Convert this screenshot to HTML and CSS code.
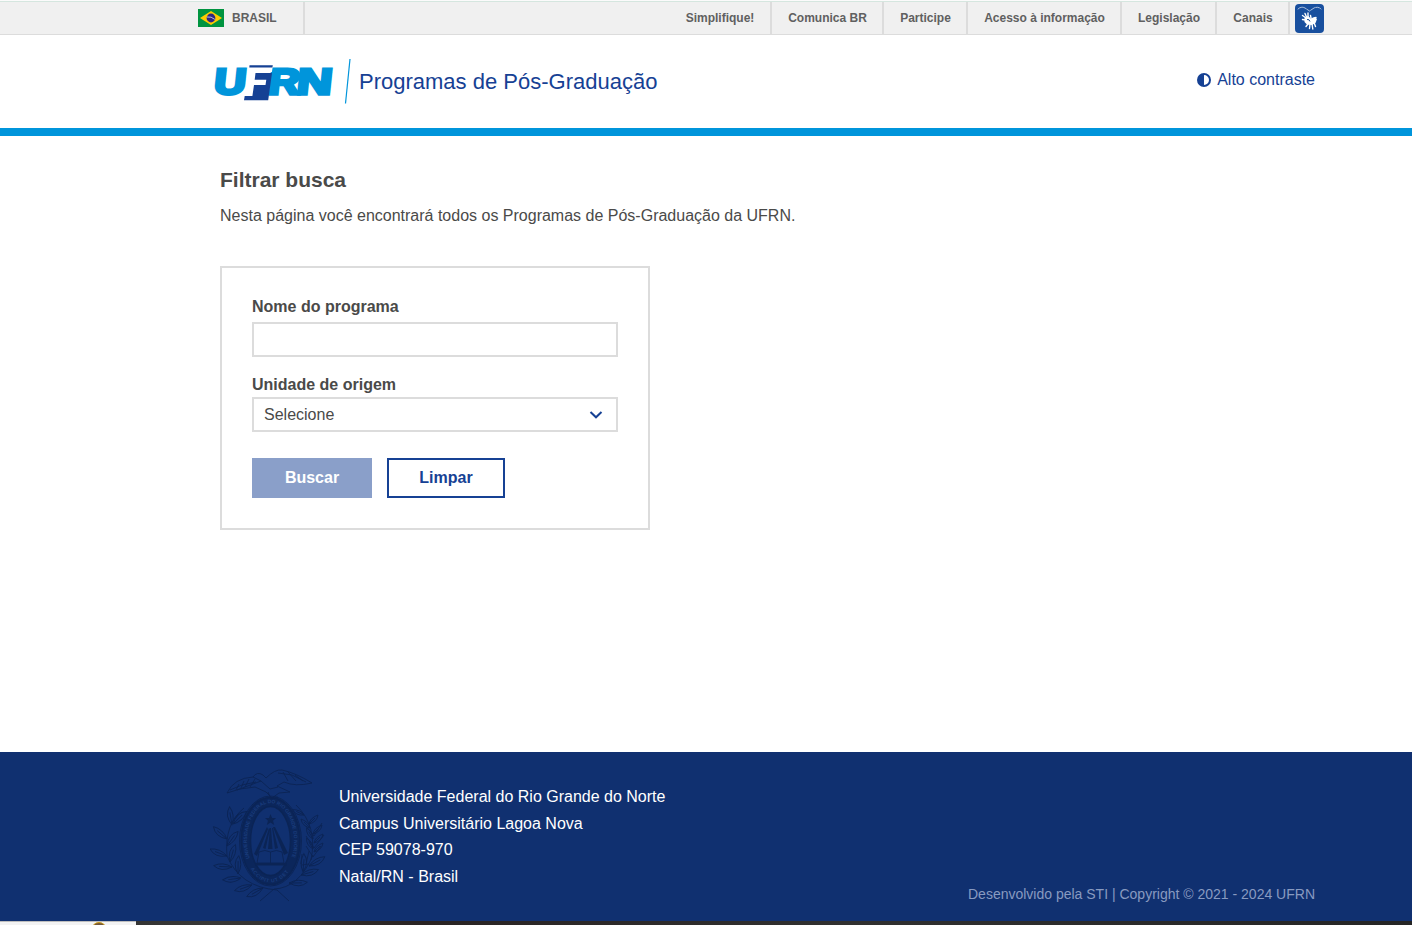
FILE: index.html
```
<!DOCTYPE html>
<html lang="pt-BR">
<head>
<meta charset="utf-8">
<title>Programas de Pós-Graduação - UFRN</title>
<link rel="stylesheet" href="styles.css">
</head>
<body>
<div class="page">
  <nav class="govbar">
    <a class="brasil">
      <svg class="flag" viewBox="0 0 26 18"><path fill="#009440" d="M0 0h26v18H0z"/><path fill="#ffcb00" d="M13 2l11 7-11 7L2 9z"/><circle cx="13" cy="9" r="4.400" fill="#302681"/><path d="M8.800 8q4.500-.8 8 2.400" fill="none" stroke="#dfe3ef" stroke-width=".8"/></svg>
      <span>BRASIL</span>
    </a>
    <ul class="links">
      <li class="w-simp">Simplifique!</li><li class="w-com">Comunica BR</li><li class="w-part">Participe</li><li class="w-acesso">Acesso à informação</li><li class="w-leg">Legislação</li><li class="w-canais">Canais</li>
    </ul>
    <svg class="vlibras" viewBox="0 0 29 29"><rect width="29" height="29" rx="4" fill="#184f9e"/><g fill="none" stroke="#fff" stroke-linecap="round"><path d="M3 5q3-3 7-1l4.500 3L19 4q4-2 7 1" stroke-width=".8" stroke-dasharray="4 1" opacity=".8"/><path d="M11 14L7.500 11.500M11.500 13L10 9.500M13 13V9M10.500 16L7.500 15.500M16 14l-.5-2.500M13 20l-2 2.500M15 20l-.5 4.500M17 20l.8 5M19 18.500l1.500 4M18 15l3-1.500" stroke-width="1.400"/></g><path fill="#fff" d="M9.500 13.500l4-1.500 2 2.500 4-1.500 2.500 2-1.500 4-3.500 2-5-.5-2.500-2.500z"/><path d="M12 15.500q2.500-.5 3 2" fill="none" stroke="#184f9e"/></svg>
  </nav>

  <header class="header">
    <div class="brand">
      <svg class="logo" viewBox="0 0 140 50" role="img" aria-label="UFRN">
        <g class="logo-letters">
          <text transform="translate(.3 38.800) skewX(-6)" textLength="31.500" lengthAdjust="spacingAndGlyphs">U</text>
          <text transform="translate(54.500 38.600) skewX(-6)" textLength="31" lengthAdjust="spacingAndGlyphs">R</text>
          <text transform="translate(83 38.600) skewX(-6)" textLength="35" lengthAdjust="spacingAndGlyphs">N</text>
        </g>
        <path fill="#fff" d="M35.500 12h24.200l-.8 5H42.600l-1 5.700H56l-.6 4.100H40.800l-2 12.700H32.500z"/>
        <path fill="#164194" d="M36.500 10.300h23.300l-.4 2.200H36.300zM42.500 18H59l-3.800 27.300H31l.7-4.300h7.700l1.600-11h11.500l.8-5.300H41.700z"/>
        <path d="M137 4l-4.500 44.500" stroke="#0095db" stroke-width="1.200"/>
      </svg>
      <span class="brand-title">Programas de Pós-Graduação</span>
    </div>
    <a class="contrast"><svg viewBox="0 0 14 14"><circle cx="7" cy="7" r="6" fill="none" stroke="#164194" stroke-width="2"/><path d="M7 1a6 6 0 0 0 0 12z" fill="#164194"/></svg><span>Alto contraste</span></a>
  </header>

  <main class="main">
    <h1>Filtrar busca</h1>
    <p class="intro">Nesta página você encontrará todos os Programas de Pós-Graduação da UFRN.</p>
    <form class="filter">
      <label for="nome">Nome do programa</label>
      <input class="field" id="nome" type="text">
      <label class="second">Unidade de origem</label>
      <div class="field select"><span>Selecione</span><svg viewBox="0 0 14 10"><path d="M1.500 2L7 7.300 12.500 2" fill="none" stroke="#164194" stroke-width="2"/></svg></div>
      <div class="actions"><button type="button" class="btn primary">Buscar</button><button type="button" class="btn outline">Limpar</button></div>
    </form>
  </main>

  <footer class="footer">
    <svg class="seal" viewBox="0 0 120 140">
      <defs>
        <path id="ring-top" d="M40 95A23.500 37.500 0 1 1 81 95"/>
        <path id="ring-bottom" d="M39.500 103A27 41.500 0 0 0 81.500 103"/>
        <path id="leaf" d="M0 0Q-7-8-17-7Q-12 2 0 0M0 0L-12-4.500"/>
        <path id="sprig" d="M0 0Q-1-6-9-9Q-8-2 0 0M0 0L-6-6"/>
      </defs>
      <g fill="none" stroke="#0b2455" stroke-width=".9">
        <ellipse cx="60.500" cy="77" rx="31" ry="45"/>
        <ellipse cx="60.500" cy="77" rx="25" ry="39" stroke-width="9" stroke="#0b265b"/>
        <ellipse cx="60.500" cy="77" rx="29.500" ry="43.500" stroke-width="1.500"/>
        <ellipse cx="60.500" cy="77" rx="20" ry="34.500" stroke-width="1.500"/>
        <path d="M17 29Q24 14 43 13Q47 7 53 11L56 14Q65 5 72 6Q86 9 102 19Q85 23 74 18L67 22 80 28 69 29 62 34 56 28 45 23Q29 24 17 29zM43 13l8 4-24 9M51 17l9 8 8-2M29 20l-3 6m8-9l-3 7m8-9l-4 8m10-8l-5 8M20 26l12-5 14-3M68 9l14 2 14 7M73 8l5 9m0-9l8 9m-1-6l8 6M58 28l3 7 7-2"/>
        <path d="M17 92Q14 60 34 44M101 96Q108 62 86 41M17 92Q30 123 67 126L79 137M103 91Q89 124 64 125L50 137" />
        <g>
          <use href="#leaf" transform="translate(17 92)"/>
          <use href="#leaf" transform="translate(17 75) rotate(20)"/>
          <use href="#leaf" transform="translate(22 61) rotate(60)"/>
          <use href="#leaf" transform="translate(17 82) rotate(105)"/>
          <use href="#leaf" transform="translate(23 60) rotate(115)"/>
          <use href="#leaf" transform="translate(22 103) rotate(-18)"/>
          <use href="#leaf" transform="translate(20 98) rotate(85)"/>
          <use href="#leaf" transform="translate(31 114) rotate(-28)"/>
          <use href="#leaf" transform="translate(28 110) rotate(70)"/>
          <use href="#leaf" transform="translate(42 121) rotate(-40)"/>
          <use href="#leaf" transform="translate(53 124) rotate(-50)"/>
          <use href="#sprig" transform="translate(104 88) scale(-1 1)"/>
          <use href="#sprig" transform="translate(104 79) scale(-1 1)"/>
          <use href="#sprig" transform="translate(103 70) scale(-1 1)"/>
          <use href="#sprig" transform="translate(99 60) scale(-1 1)"/>
          <use href="#sprig" transform="translate(103 85) rotate(15)"/>
          <use href="#sprig" transform="translate(103 75) rotate(15)"/>
          <use href="#sprig" transform="translate(100 64)"/>
          <use href="#sprig" transform="translate(94 51) rotate(-20)"/>
          <use href="#leaf" transform="translate(99 102) scale(-1 1) rotate(8)"/>
          <use href="#leaf" transform="translate(91 111) scale(-1 1) rotate(-5)"/>
          <use href="#leaf" transform="translate(79 119) scale(-1 1) rotate(-20)"/>
          <use href="#leaf" transform="translate(93 108) scale(-1 1) rotate(65)"/>
          <path d="M96 62l8 10 8-13M96 72l8 12 10-13M96 82l7 11 8-11M91 100l1-10m4 10l3-13m-7 14l7-1"/>
        </g>
        <path d="M49 88q6-3 11.500 0 6-3 11.500 0l2 11H47zM60.500 88v11" fill="#103070"/>
      </g>
      <g fill="#0b2455">
        <path d="M60.500 50l1.600 4h4l-3.100 2.700 1.200 4.300-3.700-2.500-3.700 2.500 1.200-4.300L55 54h4z"/>
        <path d="M57 63L44 90l3 2 11-27zM59 64l-6 20 2.500 1L60 65zM60 64l-2 21h4.500l-1.500-21zM62 64l3 21 3-1-5-20zM63 63l11 28 4-2-13-26zM46 99h30l1 2.500H45z"/>
      </g>
      <g class="seal-text"><text><textPath href="#ring-top" startOffset="1" textLength="131" lengthAdjust="spacingAndGlyphs">UNIVERSIDADE FEDERAL DO RIO GRANDE DO NORTE</textPath></text><text><textPath href="#ring-bottom" startOffset="2" textLength="47">ACCIPIT UT DET</textPath></text></g>
    </svg>
    <address>Universidade Federal do Rio Grande do Norte<br>Campus Universitário Lagoa Nova<br>CEP 59078-970<br>Natal/RN - Brasil</address>
    <p class="copyright">Desenvolvido pela STI | Copyright © 2021 - 2024 UFRN</p>
  </footer>
  <div class="taskbar"><div class="taskbar-light"><span class="taskbar-icon"></span></div></div>
</div>
</body>
</html>
```
FILE: styles.css
```
* { box-sizing: border-box; }
body { margin: 0; background: #fff; color: #4a4a49; font: 16px/24px "Liberation Sans", Arial, sans-serif; overflow: hidden; }
.page { height: 925px; display: flex; flex-direction: column; }
.govbar { height: 35px; flex: none; display: flex; align-items: stretch; padding: 0 88px 0 198px; background: #f0f0f0; border-top: 1px solid #fbfbfb; border-bottom: 1px solid #dcdcdc; box-shadow: inset 0 1px #d5e6df; font-size: 12px; font-weight: bold; line-height: 33px; color: #606060; }
.brasil { display: flex; align-items: center; width: 107px; border-right: 2px solid #dcdcdc; gap: 8px; margin-top: 1px; }
.flag { width: 26px; height: 18px; }
.links { display: flex; list-style: none; padding: 0; margin: 1px 5px 0 auto; line-height: 33px; height: 32px; }
.links li { border-right: 2px solid #dcdcdc; text-align: center; white-space: nowrap; padding-left: 1px; }
.w-simp { width: 103px; }
.w-com { width: 112px; }
.w-part { width: 84px; }
.w-acesso { width: 154px; }
.w-leg { width: 95px; }
.w-canais { width: 73px; }
.vlibras { width: 29px; height: 29px; margin-top: 3px; }
.header { height: 101px; flex: none; display: flex; justify-content: space-between; padding: 20px 97px 0 213px; border-bottom: 8px solid #0095db; color: #164194; }
.brand { display: flex; gap: 6px; height: 50px; }
.logo { width: 140px; height: 50px; }
.logo-letters { font: bold 36px "Liberation Sans", sans-serif; fill: #0095db; stroke: #0095db; stroke-width: 3.4px; }
.brand-title { font-size: 22px; line-height: 54px; }
.contrast { display: flex; align-items: center; gap: 6px; height: 50px; }
.contrast svg { width: 14px; height: 14px; }
.main { flex: 1; padding: 31px 220px 0; }
h1 { margin: 0; font-size: 21px; line-height: 26px; }
.intro { margin: 11px 0 38px; }
.filter { width: 430px; height: 264px; padding: 27px 30px; border: 2px solid #dcdcdc; }
label { display: block; font-weight: bold; line-height: 24px; height: 27px; }
.second { margin-top: 16px; height: 24px; }
.field { display: block; width: 366px; height: 35px; border: 2px solid #dcdcdc; background: #fff; }
.select { display: flex; align-items: center; justify-content: space-between; padding: 0 13px 0 10px; }
.select svg { width: 14px; height: 10px; margin-top: 1px; }
.actions { display: flex; gap: 15px; margin-top: 26px; }
.btn { height: 40px; padding: 0; font: bold 16px "Liberation Sans", Arial, sans-serif; border-radius: 0; }
.primary { width: 120px; border: 0; background: #8a9fc9; color: #fff; }
.outline { width: 118px; border: 2px solid #164194; background: #fff; color: #164194; }
.footer { height: 169px; flex: none; display: flex; background: #103070; color: #fff; padding: 12px 97px 0 210px; }
.seal { width: 120px; height: 140px; }
.seal-text { font: bold 5px "Liberation Sans", sans-serif; fill: #1a3c7c; }
address { font-style: normal; line-height: 26.5px; margin: 20px 0 0 9px; }
.copyright { margin: 0 0 15px auto; align-self: flex-end; font-size: 14px; color: #889ac0; }
.taskbar { height: 4px; flex: none; background: linear-gradient(90deg, #2c2c2c, #383838 15%, #292323 30%, #303030 60%, #252525); }
.taskbar-light { width: 136px; height: 4px; padding-left: 91px; background: #f3f3f3; border-top: 1px solid #bebebe; overflow: hidden; }
.taskbar-icon { display: block; width: 16px; height: 16px; border-radius: 50%; background: #73583b; border: 1px solid #c99a18; }
```
